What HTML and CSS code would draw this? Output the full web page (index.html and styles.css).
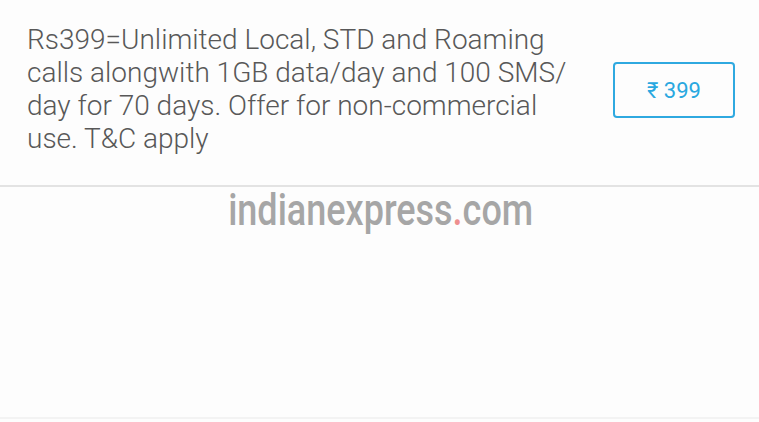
FILE: index.html
```html
<!DOCTYPE html>
<html>
<head>
<meta charset="utf-8">
<link rel="stylesheet" href="styles.css">
</head>
<body>
<div class="page">
  <div class="plan">
    <p class="desc">Rs399=Unlimited Local, STD and Roaming calls alongwith 1GB data/day and 100 SMS/ day for 70 days. Offer for non-commercial use. T&amp;C apply</p>
    <div class="price-btn">₹ 399</div>
  </div>
  <div class="watermark"><span class="wm-text">indianexpress<span class="dot">.</span>com</span></div>
  <div class="spacer"></div>
  <div class="bottom-line"></div>
</div>
</body>
</html>
```
FILE: styles.css
```css
html, body {
  margin: 0;
  padding: 0;
  background: #fdfdfd;
}
.page {
  width: 759px;
  height: 422px;
  display: flex;
  flex-direction: column;
  overflow: hidden;
}
.plan {
  display: flex;
  align-items: flex-start;
  padding: 23px 24px 0 27px;
  height: 187px;
  box-sizing: border-box;
  border-bottom: 2px solid #e3e3e3;
}
.desc {
  margin: 0;
  width: 556px;
  font-family: Roboto, "Noto Sans", sans-serif;
  font-weight: 300;
  font-size: 28px;
  line-height: 33px;
  color: #585858;
}
.price-btn {
  margin-left: auto;
  margin-top: 39px;
  width: 118px;
  height: 52px;
  border: 2px solid #2fa9e0;
  border-radius: 4px;
  display: flex;
  align-items: center;
  justify-content: center;
  font-family: Roboto, "Noto Sans", sans-serif;
  font-size: 22px;
  color: #29a8e0;
}
.watermark {
  display: flex;
  justify-content: center;
  height: 46px;
  padding-left: 2px;
}
.wm-text {
  display: inline-block;
  font-family: Roboto, sans-serif;
  font-weight: 500;
  font-size: 45px;
  line-height: 46px;
  color: #a6a6a6;
  transform: scaleX(0.8);
  white-space: nowrap;
}
.dot {
  color: #ee8f8f;
}
.spacer {
  flex: 1;
}
.bottom-line {
  height: 2px;
  background: #f3f3f3;
  margin-bottom: 3px;
}
```
